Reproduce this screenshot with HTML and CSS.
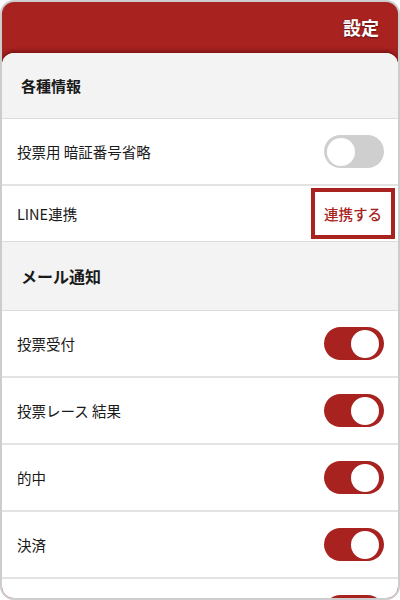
FILE: index.html
```html
<!doctype html>
<html lang="ja">

<head>
    <meta charset="UTF-8">
    <title>設定</title>
    <link rel="stylesheet" href="styles.css">
</head>

<body>
    <div class="phone">
        <div class="head">
            <h1>設定</h1>
        </div>
        <div class="card">
            <div class="sec">各種情報</div>
            <div class="row">
                <span>投票用 暗証番号省略</span>
                <span class="sw"></span>
            </div>
            <div class="row row-line">
                <span>LINE連携</span>
                <a class="link" href="#">連携する</a>
            </div>
            <div class="sec sec-big">メール通知</div>
            <div class="row">
                <span>投票受付</span>
                <span class="sw on"></span>
            </div>
            <div class="row">
                <span>投票レース 結果</span>
                <span class="sw on"></span>
            </div>
            <div class="row">
                <span>的中</span>
                <span class="sw on"></span>
            </div>
            <div class="row">
                <span>決済</span>
                <span class="sw on"></span>
            </div>
            <div class="row">
                <span></span>
                <span class="sw on"></span>
            </div>
        </div>
    </div>
</body>

</html>
```

FILE: styles.css
```css
* {
    margin: 0;
    padding: 0;
    box-sizing: border-box;
}

body {
    background: #fff;
    font-family: "Noto Sans CJK JP", "Noto Sans", sans-serif;
    color: #1a1a1a;
}

.phone {
    width: 400px;
    height: 600px;
    border: 2px solid #cdcdcd;
    border-radius: 14px;
    overflow: hidden;
    background: #a82220;
    display: flex;
    flex-direction: column;
}

.head {
    height: 51px;
    flex: none;
    display: flex;
    align-items: center;
    justify-content: flex-end;
    padding: 0 19px 2px 0;
}

.head h1 {
    color: #fff;
    font-size: 18px;
    font-weight: bold;
    text-shadow: 0 1px 2px rgba(0, 0, 0, .45);
}

.card {
    flex: 1;
    background: #fff;
    border-radius: 12px 12px 0 0;
    box-shadow: 0 -2px 4px rgba(60, 0, 0, .45);
    overflow: hidden;
}

.sec {
    height: 66px;
    background: #f3f3f3;
    border-bottom: 1px solid #dcdcdc;
    display: flex;
    align-items: center;
    padding-left: 19px;
    font-size: 15px;
    font-weight: bold;
}

.sec-big {
    height: 69px;
    font-size: 16px;
    padding-left: 19px;
}

.row {
    height: 67px;
    border-bottom: 2px solid #e3e3e3;
    display: flex;
    align-items: center;
    justify-content: space-between;
    padding: 0 14px 0 15px;
    font-size: 14.5px;
}

.row-line {
    height: 56px;
    padding-right: 3px;
    border-bottom: 1px solid #dcdcdc;
}

.link {
    width: 84px;
    height: 51px;
    border: 4px solid #a82220;
    color: #a82220;
    font-size: 14.5px;
    font-weight: 500;
    text-decoration: none;
    display: flex;
    align-items: center;
    justify-content: center;
}

/* スイッチ */
.sw {
    width: 60px;
    height: 33px;
    border-radius: 17px;
    background: #cfcfcf;
    display: flex;
    align-items: center;
    padding: 0 3px;
}

.sw::after {
    content: "";
    width: 28px;
    height: 28px;
    border-radius: 50%;
    background: #fff;
}

.sw.on {
    background: #a82220;
    justify-content: flex-end;
}

.sw.on::after {
    border: 2px solid #a82220;
}
```
